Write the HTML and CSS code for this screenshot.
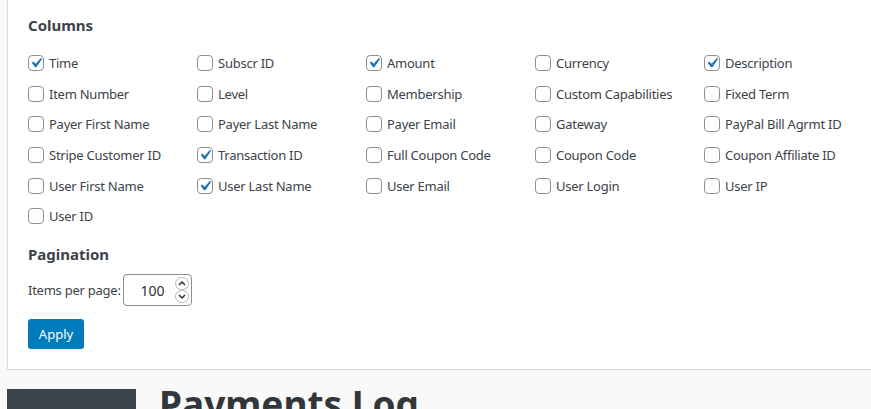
FILE: index.html
```html
<!DOCTYPE html>
<html>
<head>
<meta charset="utf-8">
<link rel="stylesheet" href="styles.css">
</head>
<body>
<div class="panel">
  <h5 class="heading">Columns</h5>
  <div class="cols">
    <label class="opt"><span class="box checked"><svg viewBox="0 0 20 20"><path d="M14.83 4.89l1.34.94-5.81 8.38H9.02L5.78 9.67l1.34-1.25 2.57 2.4z"/></svg></span>Time</label>
    <label class="opt"><span class="box"></span>Subscr ID</label>
    <label class="opt"><span class="box checked"><svg viewBox="0 0 20 20"><path d="M14.83 4.89l1.34.94-5.81 8.38H9.02L5.78 9.67l1.34-1.25 2.57 2.4z"/></svg></span>Amount</label>
    <label class="opt"><span class="box"></span>Currency</label>
    <label class="opt"><span class="box checked"><svg viewBox="0 0 20 20"><path d="M14.83 4.89l1.34.94-5.81 8.38H9.02L5.78 9.67l1.34-1.25 2.57 2.4z"/></svg></span>Description</label>

    <label class="opt"><span class="box"></span>Item Number</label>
    <label class="opt"><span class="box"></span>Level</label>
    <label class="opt"><span class="box"></span>Membership</label>
    <label class="opt"><span class="box"></span>Custom Capabilities</label>
    <label class="opt"><span class="box"></span>Fixed Term</label>

    <label class="opt"><span class="box"></span>Payer First Name</label>
    <label class="opt"><span class="box"></span>Payer Last Name</label>
    <label class="opt"><span class="box"></span>Payer Email</label>
    <label class="opt"><span class="box"></span>Gateway</label>
    <label class="opt"><span class="box"></span>PayPal Bill Agrmt ID</label>

    <label class="opt"><span class="box"></span>Stripe Customer ID</label>
    <label class="opt"><span class="box checked"><svg viewBox="0 0 20 20"><path d="M14.83 4.89l1.34.94-5.81 8.38H9.02L5.78 9.67l1.34-1.25 2.57 2.4z"/></svg></span>Transaction ID</label>
    <label class="opt"><span class="box"></span>Full Coupon Code</label>
    <label class="opt"><span class="box"></span>Coupon Code</label>
    <label class="opt"><span class="box"></span>Coupon Affiliate ID</label>

    <label class="opt"><span class="box"></span>User First Name</label>
    <label class="opt"><span class="box checked"><svg viewBox="0 0 20 20"><path d="M14.83 4.89l1.34.94-5.81 8.38H9.02L5.78 9.67l1.34-1.25 2.57 2.4z"/></svg></span>User Last Name</label>
    <label class="opt"><span class="box"></span>User Email</label>
    <label class="opt"><span class="box"></span>User Login</label>
    <label class="opt"><span class="box"></span>User IP</label>

    <label class="opt"><span class="box"></span>User ID</label>
  </div>
  <h5 class="heading pag">Pagination</h5>
  <div class="perpage">
    <span class="plabel">Items per page:</span>
    <div class="num">
      <span class="val">100</span>
      <span class="spin">
        <svg viewBox="0 0 14 26" width="14" height="26">
          <rect x="0.5" y="0.5" width="13" height="12" rx="6" fill="#fff" stroke="#b5b5b5"/>
          <rect x="0.5" y="13.5" width="13" height="12" rx="6" fill="#fff" stroke="#b5b5b5"/>
          <path d="M4 8 L7 5 L10 8" fill="none" stroke="#2c2c2c" stroke-width="1.5"/>
          <path d="M4 18 L7 21 L10 18" fill="none" stroke="#2c2c2c" stroke-width="1.5"/>
        </svg>
      </span>
    </div>
  </div>
  <button class="apply">Apply</button>
</div>
<div class="page">
  <div class="sidebar"></div>
  <h1 class="title">Payments Log</h1>
</div>
</body>
</html>
```
FILE: styles.css
```css
html, body { margin: 0; padding: 0; }
body {
  background: #f9f9f9;
  font-family: "Noto Sans", "DejaVu Sans", sans-serif;
  font-size: 13px;
  color: #3c434a;
  overflow: hidden;
  height: 409px;
}
.panel {
  margin-left: 7px;
  background: #fff;
  border-left: 1px solid #dcdcde;
  border-bottom: 1px solid #dcdcde;
  padding: 14px 20px 20px 20px;
  height: 335px;
}
.heading {
  margin: 0;
  font-size: 15px;
  font-weight: 700;
  color: #3c434a;
  line-height: 22px;
}
.cols {
  margin-top: 19px;
  display: grid;
  grid-template-columns: repeat(5, 169px);
  grid-auto-rows: 30.7px;
  letter-spacing: -0.25px;
}
.opt {
  display: flex;
  align-items: center;
  height: 16px;
  white-space: nowrap;
}
.box {
  width: 14px;
  height: 14px;
  border: 1px solid #8c8f94;
  border-radius: 4px;
  margin-right: 5px;
  background: #fff;
  flex: none;
  display: flex;
  align-items: center;
  justify-content: center;
}
.box svg { width: 20px; height: 20px; fill: #2271b1; margin: -3px; }
.pag { margin-top: 4px; }
.perpage {
  margin-top: 9px;
  display: flex;
  align-items: center;
}
.plabel { margin-right: 2px; letter-spacing: -0.25px; }
.num {
  width: 67px;
  height: 30px;
  border: 1px solid #8c8f94;
  border-radius: 4px;
  display: flex;
  align-items: center;
  justify-content: flex-end;
  color: #2c3338;
  font-size: 14px;
}
.val { margin-right: 10px; }
.spin { display: flex; margin-right: 2px; }
.apply {
  margin-top: 13px;
  background: #007cba;
  color: #fff;
  border: 0;
  border-radius: 3px;
  font-family: inherit;
  font-size: 13px;
  width: 56px;
  height: 30px;
  padding: 0;
}
.page {
  display: flex;
  margin-top: 19px;
  margin-left: 7px;
}
.sidebar {
  width: 129px;
  height: 40px;
  background: #3c434a;
  flex: none;
}
.title {
  margin: 0 0 0 23px;
  font-size: 37px;
  font-weight: 700;
  color: #32373c;
  line-height: 30px;
}
```
